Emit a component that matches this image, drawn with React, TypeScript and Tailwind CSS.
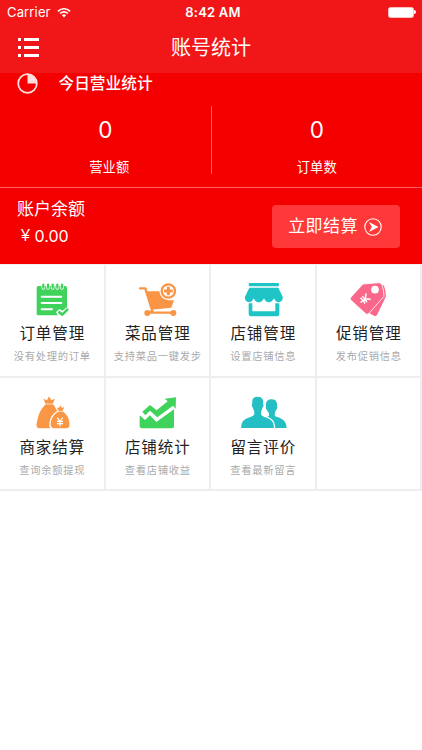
import type { ReactNode } from "react";

const OrdersIcon = () => (
  <>
    <path fill="#3fd35c" d="M115 72h81q5 0 5 6v58l-14 10-8-5-11 9 5 10h-58q-5 0-5-5V78q0-6 5-6z" />
    <path stroke="#fff" strokeWidth="11" strokeLinecap="round" d="M130 70v8M144 70v8M158 70v8M172 70v8M186 70v8" />
    <path stroke="#3fd35c" strokeWidth="7" strokeLinecap="round" d="M130 68v9M144 68v9M158 68v9M172 68v9M186 68v9" />
    <path stroke="#fff" strokeWidth="6" strokeLinecap="round" d="M125 104h59M125 123h59M125 142h31" />
    <path fill="none" stroke="#3fd35c" strokeWidth="8" strokeLinecap="round" strokeLinejoin="round" d="m178 151 9 7 15-15" />
  </>
);

const CartIcon = () => (
  <>
    <path fill="none" stroke="#f99545" strokeWidth="7" strokeLinecap="round" strokeLinejoin="round" d="M105 79h16l21 68-14 5M128 152h76" />
    <path fill="#f99545" d="M121 88h42q3 24 28 27h16l-8 22-60 6z" />
    <circle cx="190" cy="87" r="20" fill="none" stroke="#f99545" strokeWidth="7" />
    <path stroke="#f99545" strokeWidth="9" d="M190 74v26M177 87h26" />
    <circle cx="127" cy="153" r="9" fill="#f99545" />
    <circle cx="205" cy="153" r="9" fill="#f99545" />
  </>
);

const ShopIcon = () => (
  <>
    <rect x="113" y="63" width="91" height="10" rx="4" fill="#1fc4c6" />
    <path fill="#1fc4c6" d="M115 77h87l13 27q2 15-12 17-9 0-14-12-6 12-16 12-9 0-14-12-6 12-15 12-10 0-16-12-5 12-14 12-14-2-12-17z" />
    <path fill="#1fc4c6" d="M113 124h11v24h69v-24h12v33q0 6-6 6h-80q-6 0-6-6z" />
  </>
);

const TagIcon = () => (
  <>
    <path fill="#f9678a" d="m194 66 10 5q5 15 6 32l-27 56q-4 5-9 2l-24-13z" />
    <path fill="#f9678a" stroke="#fff" strokeWidth="2.5" d="m141 66 48-4q7 0 9 7 6 17 6 34l-44 50q-6 6-11 2l-45-41q-3-4 1-9z" />
    <circle cx="177" cy="83" r="11.5" fill="#fff" />
    <g fill="none" stroke="#fff" strokeWidth="4.5" transform="translate(147 111) rotate(52)">
      <path d="m-11-13 11 12 11-12M0-1v18M-11 1h22M-11 8h22" />
    </g>
  </>
);

const BagsIcon = () => (
  <>
    <path fill="#fa9746" d="m137 85-7-17 11 5 6-12 7 12 11-5-7 17q22 13 23 39l-10 33h-53q-13-3-7-20 5-32 26-52z" />
    <path fill="#fa9746" stroke="#fff" strokeWidth="4" d="m174 105-8-14 10 2 5-9 5 9 10-2-6 14q19 14 20 36 3 15-9 18h-41q-12-3-10-18 3-23 24-36z" />
    <path stroke="#fff" strokeWidth="2" d="M136 84h23M173 106h17" />
    <path fill="none" stroke="#fff" strokeWidth="3.5" d="m172 125 8 11 8-11M180 135v16M171 136h18M171 143h18" />
  </>
);

const ChartIcon = () => (
  <>
    <path fill="#3fd35c" d="m112 107 23-20 20 16 33-27-9-8 34-4-1 34-8-9-47 35-22-20-14 14z" />
    <path fill="#3fd35c" d="m106 119 14 13 15-14 19 20 53-38v51q0 6-6 6h-91q-6 0-6-6v-31z" />
  </>
);

const PeopleIcon = () => (
  <>
    <path fill="#24bfc4" d="M182 70c14 0 17 10 16 21 3 5 0 9-3 11-2 5-4 8-4 14 0 4 3 6 8 7 18 7 27 13 28 33h-40l-18-34c5-2 7-5 4-12-3-4-4-5-5-8-3-2-5-7-3-11-1-14 4-21 17-21z" />
    <path fill="#24bfc4" stroke="#fff" strokeWidth="4" d="M140 60c16 0 20 11 18 23 3 5 1 10-2 13-1 6-3 8-4 12v6c1 5 7 6 12 8 19 7 26 13 27 36H88c1-23 8-29 27-36 6-2 12-3 13-8v-6c-1-4-3-6-4-12-3-3-5-8-2-13-2-12 2-23 18-23z" />
  </>
);

type MenuItem = { title: string; note: string; icon: ReactNode };

const items: MenuItem[] = [
  { title: "订单管理", note: "没有处理的订单", icon: <OrdersIcon /> },
  { title: "菜品管理", note: "支持菜品一键发步", icon: <CartIcon /> },
  { title: "店铺管理", note: "设置店铺信息", icon: <ShopIcon /> },
  { title: "促销管理", note: "发布促销信息", icon: <TagIcon /> },
  { title: "商家结算", note: "查询余额提现", icon: <BagsIcon /> },
  { title: "店铺统计", note: "查看店铺收益", icon: <ChartIcon /> },
  { title: "留言评价", note: "查看最新留言", icon: <PeopleIcon /> },
];

function MenuCell({ item }: { item?: MenuItem }) {
  return (
    <div className="flex flex-col items-center border-r-2 border-b-2 border-[#eeeef1] bg-white pt-[15px] nth-[n+5]:pt-4">
      {item && (
        <>
          <svg className="h-10 w-12 shrink-0" viewBox="84 54 144 120" fill="none">
            {item.icon}
          </svg>
          <div className="mt-[2px] -mr-px text-[15.5px] leading-6 tracking-[0.9px] whitespace-nowrap text-[#222]">{item.title}</div>
          <div className="mt-[2px] -mr-px text-[10.3px] leading-4 tracking-[0.7px] whitespace-nowrap text-[#aaa]">{item.note}</div>
        </>
      )}
    </div>
  );
}

function Stat({ value, label, labelClass = "" }: { value: string; label: string; labelClass?: string }) {
  return (
    <div className="flex flex-1 flex-col items-center">
      <div className="mt-[9px] text-[22.5px] leading-[30px]">{value}</div>
      <div className={`mt-[12px] text-[13.3px] leading-5 ${labelClass}`}>{label}</div>
    </div>
  );
}

export default function App() {
  return (
    <div className="h-[750px] w-[422px] overflow-hidden bg-white font-['Inter','Noto_Sans_CJK_SC',sans-serif] text-white">
      <header className="h-[73px] bg-[#f11718]">
        <div className="grid h-6 grid-cols-3 items-center pr-[6px] pl-[7px] text-[13px] leading-6">
          <div className="flex items-center gap-[6px] tracking-[0.15px]">
            Carrier
            <svg className="h-[11px] w-[14px]" viewBox="0 0 15 11" fill="none" stroke="white" strokeWidth="1.8">
              <path d="M1 4.2a9.2 9.2 0 0 1 13 0M3.4 6.6a5.8 5.8 0 0 1 8.2 0" />
              <path d="M5.2 8.4a3.3 3.3 0 0 1 4.6 0L7.5 10.8z" fill="white" stroke="none" />
            </svg>
          </div>
          <div className="pl-[3px] text-center font-semibold tracking-[0.2px] whitespace-nowrap">8:42 AM</div>
          <div className="flex items-center justify-end">
            <div className="h-[11px] w-[26px] rounded-[2.5px] border border-[#ffc0c0] bg-white" />
            <div className="h-[4px] w-[2px] rounded-r-full bg-white" />
          </div>
        </div>
        <div className="grid h-[47px] grid-cols-3 items-center px-[18px]">
          <svg className="h-[19px] w-[21px]" viewBox="0 0 21 19" fill="white">
            <path d="M0 0h3v3H0zM6 0h15v3H6zM0 8h3v3H0zM6 8h15v3H6zM0 16h3v3H0zM6 16h15v3H6z" />
          </svg>
          <h1 className="text-center text-[20px] leading-8 whitespace-nowrap">账号统计</h1>
        </div>
      </header>

      <section className="h-[191px] bg-[#f40000]">
        <div className="flex h-[33px] items-start pl-[17px]">
          <svg className="h-[21px] w-[21px]" viewBox="0 0 21 21">
            <circle cx="10.5" cy="10.5" r="9.3" fill="none" stroke="#ffdede" strokeWidth="1.8" />
            <path d="M10.5 1.5a9 9 0 0 1 9 9h-9z" fill="#ffdede" />
          </svg>
          <h2 className="ml-[20.5px] text-[15.7px] leading-[22px] font-medium">今日营业统计</h2>
        </div>
        <div className="flex h-[82px] border-b border-[#ff6262]">
          <Stat value="0" label="营业额" labelClass="pl-2" />
          <div className="h-[68px] w-px bg-[#ff6262]" />
          <Stat value="0" label="订单数" />
        </div>
        <div className="flex h-[76px] items-start justify-between pr-[22px] pl-[17px]">
          <div>
            <div className="mt-[9px] text-[17px] leading-6">账户余额</div>
            <div className="mt-[3px] flex items-center pl-[4px] text-[16px] leading-6">
              <span className="w-[13.5px] font-['Liberation_Sans']">¥</span>
              <span>0.00</span>
            </div>
          </div>
          <button className="mt-[17px] flex h-[43px] w-[128px] items-center justify-center gap-[6px] rounded-[4px] bg-[#ff3939] pr-[2px] text-[17px] tracking-[0.4px]">
            <span className="pt-px">立即结算</span>
            <svg className="h-[18px] w-[18px]" viewBox="0 0 18 18">
              <circle cx="9" cy="9" r="8.2" fill="none" stroke="white" strokeWidth="1.1" />
              <path d="m5 4 9.5 5L5 14l2.8-5z" fill="white" />
            </svg>
          </button>
        </div>
      </section>

      <main className="grid grid-cols-4 grid-rows-[113px_113px] border-t border-[#f4eeee]">
        {items.map((item) => (
          <MenuCell key={item.title} item={item} />
        ))}
        <MenuCell />
      </main>
    </div>
  );
}
